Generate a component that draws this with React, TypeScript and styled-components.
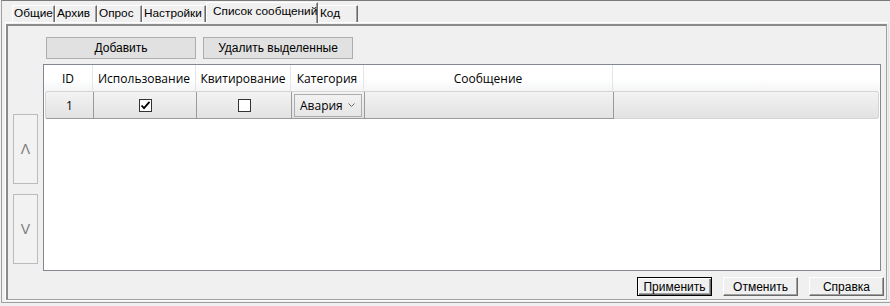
import React, { useState } from 'react';
import styled, { createGlobalStyle } from 'styled-components';

const GlobalStyle = createGlobalStyle`
  html, body {
    margin: 0;
    padding: 0;
    background: #f0f0f0;
  }
  * {
    box-sizing: border-box;
  }
`;

const tabs = [
  { title: 'Общие', width: 43 },
  { title: 'Архив', width: 42 },
  { title: 'Опрос', width: 45 },
  { title: 'Настройки', width: 64 },
  { title: 'Список сообщений', width: 112 },
  { title: 'Код', width: 40 },
];

const columns = [
  { title: 'ID', width: 49 },
  { title: 'Использование', width: 103 },
  { title: 'Квитирование', width: 95 },
  { title: 'Категория', width: 73 },
  { title: 'Сообщение', width: 249 },
];

const CheckMark: React.FC = () => (
  <svg width="11" height="11" viewBox="0 0 11 11">
    <path d="M1.5 5.5 L4 8.2 L9.5 1.8" fill="none" stroke="#000" strokeWidth="1.8" />
  </svg>
);

const Chevron: React.FC = () => (
  <svg width="7" height="4" viewBox="0 0 7 4">
    <polyline points="0.5,0.5 3.5,3.5 6.5,0.5" fill="none" stroke="#6a6a6a" strokeWidth="1" />
  </svg>
);

const App: React.FC<{}> = () => {
  const [active, setActive] = useState<number>(4);
  const [used, setUsed] = useState<boolean>(true);
  const [ack, setAck] = useState<boolean>(false);

  return (
    <Window>
      <GlobalStyle />
      <Frame>
        <TabStrip>
          {tabs.map((t, i) => (
            <Tab key={t.title} $active={i === active} $width={t.width} onClick={() => setActive(i)}>
              {t.title}
            </Tab>
          ))}
        </TabStrip>
        <TabPage>
          <InnerFrame>
            <Body>
              <SideColumn>
                <ArrowButton disabled>Λ</ArrowButton>
                <ArrowButton disabled>V</ArrowButton>
              </SideColumn>
              <MainColumn>
                <Toolbar>
                  <FlatButton>Добавить</FlatButton>
                  <FlatButton>Удалить выделенные</FlatButton>
                </Toolbar>
                <Grid>
                  <HeaderRow>
                    {columns.map((c) => (
                      <HeaderCell key={c.title} $width={c.width}>
                        {c.title}
                      </HeaderCell>
                    ))}
                    <HeaderFiller />
                  </HeaderRow>
                  <DataRow>
                    <DataCell $width={48}>1</DataCell>
                    <DataCell $width={103}>
                      <CheckBox onClick={() => setUsed(!used)}>{used && <CheckMark />}</CheckBox>
                    </DataCell>
                    <DataCell $width={95}>
                      <CheckBox onClick={() => setAck(!ack)}>{ack && <CheckMark />}</CheckBox>
                    </DataCell>
                    <DataCell $width={73}>
                      <Combo>
                        <span>Авария</span>
                        <Chevron />
                      </Combo>
                    </DataCell>
                    <DataCell $width={249} />
                    <RowFiller />
                  </DataRow>
                </Grid>
              </MainColumn>
            </Body>
            <Footer>
              <DialogButton $primary>Применить</DialogButton>
              <DialogButton>Отменить</DialogButton>
              <DialogButton>Справка</DialogButton>
            </Footer>
          </InnerFrame>
        </TabPage>
      </Frame>
    </Window>
  );
};

export default App;

const Window = styled.div`
  width: 890px;
  height: 306px;
  padding: 0 0 3px 1px;
  background: #f0f0f0;
  font-family: 'Liberation Sans', Arial, sans-serif;
  font-size: 12px;
  color: #000;
`;

const Frame = styled.div`
  display: flex;
  flex-direction: column;
  height: 100%;
  border-left: 1px solid #a0a0a0;
  border-top: 1px solid #7a7a7a;
  border-bottom: 1px solid #a0a0a0;
`;

const TabStrip = styled.div`
  display: flex;
  align-items: flex-end;
  height: 21px;
  padding-left: 10px;
`;

const Tab = styled.div<{ $active?: boolean; $width: number }>`
  position: relative;
  z-index: ${(p) => (p.$active ? 1 : 0)};
  width: ${(p) => p.$width}px;
  height: ${(p) => (p.$active ? 21 : 17)}px;
  margin-bottom: ${(p) => (p.$active ? -1 : 0)}px;
  padding: ${(p) => (p.$active ? '1px 0 0 6px' : '0 0 0 1px')};
  background: #f0f0f0;
  border-left: 1px solid #fff;
  border-top: 1px solid #fff;
  border-right: 1px solid #696969;
  box-shadow: inset -1px 0 #a0a0a0;
  font-size: 11.8px;
  line-height: 15px;
  white-space: nowrap;
  overflow: hidden;
  cursor: default;
`;

const TabPage = styled.div`
  flex: 1;
  display: flex;
  margin: 0 1px 1px 3px;
  padding: 1px 1px 0 0;
  border-top: 1px solid #fff;
  border-left: 1px solid #fff;
  border-right: 1px solid #e3e3e3;
  border-bottom: 1px solid #fff;
`;

const InnerFrame = styled.div`
  flex: 1;
  display: flex;
  flex-direction: column;
  padding: 11px 2px 0 5px;
  border-top: 2px solid #8a8a8a;
  border-left: 2px solid #8a8a8a;
  border-right: 1px solid #a0a0a0;
  border-bottom: 1px solid #a0a0a0;
`;

const Body = styled.div`
  display: flex;
  gap: 5px;
  padding-right: 3px;
`;

const SideColumn = styled.div`
  display: flex;
  flex-direction: column;
  gap: 10px;
  width: 25px;
  padding-top: 77px;
`;

const ArrowButton = styled.button`
  width: 25px;
  height: 70px;
  padding: 0;
  background: #f2f2f2;
  border: 1px solid #bcbcbc;
  color: #7c7c7c;
  font-family: 'Liberation Sans', Arial, sans-serif;
  font-size: 14px;
`;

const MainColumn = styled.div`
  display: flex;
  flex-direction: column;
  gap: 5px;
  width: 838px;
`;

const Toolbar = styled.div`
  display: flex;
  gap: 7px;
  height: 22px;
  padding-left: 3px;
`;

const FlatButton = styled.button`
  width: 150px;
  height: 22px;
  padding: 0;
  background: #e1e1e1;
  border: 1px solid #adadad;
  color: #000;
  font-family: 'Liberation Sans', Arial, sans-serif;
  font-size: 12px;
`;

const Grid = styled.div`
  height: 207px;
  background: #fff;
  border: 1px solid #828790;
  font-family: 'Open Sans', 'Noto Sans', sans-serif;
  font-size: 12px;
`;

const HeaderRow = styled.div`
  display: flex;
  height: 26px;
  background: linear-gradient(#ffffff 55%, #f4f5f7);
`;

const HeaderCell = styled.div<{ $width: number }>`
  display: flex;
  align-items: center;
  justify-content: center;
  width: ${(p) => p.$width}px;
  border-right: 1px solid #e3e5e8;
  white-space: nowrap;
`;

const HeaderFiller = styled.div`
  flex: 1;
`;

const DataRow = styled.div`
  display: flex;
  height: 28px;
  margin: 0 1px;
  background: linear-gradient(#f3f3f3, #e2e2e2);
  border: 1px solid #d4d4d4;
  border-radius: 2px;
`;

const DataCell = styled.div<{ $width: number }>`
  display: flex;
  align-items: center;
  justify-content: center;
  width: ${(p) => p.$width}px;
  border-right: 1px solid #9a9a9a;
  border-bottom: 1px solid #9a9a9a;
  margin-bottom: -1px;
`;

const RowFiller = styled.div`
  flex: 1;
`;

const CheckBox = styled.div`
  display: flex;
  align-items: center;
  justify-content: center;
  width: 13px;
  height: 13px;
  background: #fff;
  border: 1px solid #333;
`;

const Combo = styled.div`
  display: flex;
  align-items: center;
  justify-content: space-between;
  width: 68px;
  height: 23px;
  padding: 0 6px 0 5px;
  background: linear-gradient(#f2f2f2, #e6e6e6);
  border: 1px solid #acacac;
`;

const Footer = styled.div`
  display: flex;
  justify-content: flex-end;
  gap: 11px;
  margin-top: 6px;
`;

const DialogButton = styled.button<{ $primary?: boolean }>`
  width: 75px;
  height: 19px;
  padding: 0;
  background: #f0f0f0;
  border: 1px solid;
  border-color: ${(p) => (p.$primary ? '#000' : '#fff #696969 #696969 #fff')};
  box-shadow: ${(p) =>
    p.$primary
      ? 'inset 1px 1px #fff, inset -1px -1px #696969, inset -2px -2px #a0a0a0'
      : 'inset -1px -1px #a0a0a0'};
  color: #000;
  font-family: 'Liberation Sans', Arial, sans-serif;
  font-size: 12px;
`;
